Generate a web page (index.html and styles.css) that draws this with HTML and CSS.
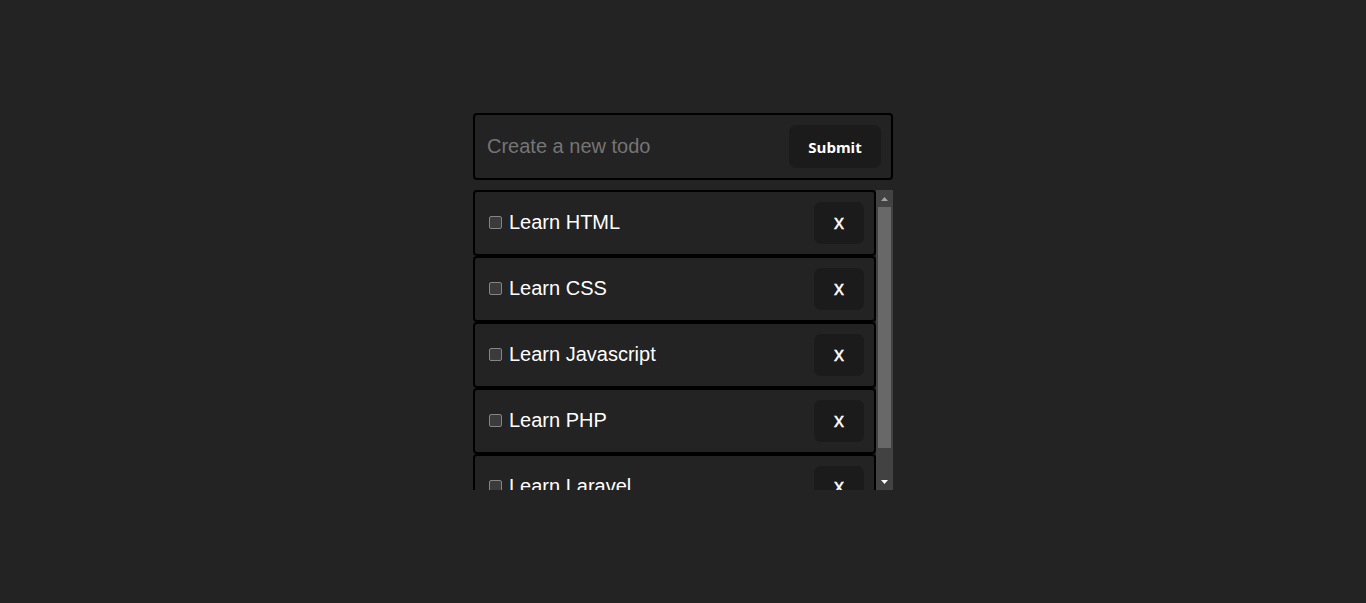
FILE: index.html
```html
<!DOCTYPE html>
<html lang="en">
<head>
<meta charset="utf-8">
<title>Todo</title>
<link rel="stylesheet" href="styles.css">
</head>
<body>
<main class="app">
  <form class="todo-form">
    <input class="todo-input" type="text" placeholder="Create a new todo">
    <button class="submit-btn" type="button">Submit</button>
  </form>
  <div class="list-wrap">
    <ul class="todo-list">
      <li class="todo-item"><label class="todo-label"><input type="checkbox" class="todo-check"><span>Learn HTML</span></label><button class="del-btn" type="button">x</button></li>
      <li class="todo-item"><label class="todo-label"><input type="checkbox" class="todo-check"><span>Learn CSS</span></label><button class="del-btn" type="button">x</button></li>
      <li class="todo-item"><label class="todo-label"><input type="checkbox" class="todo-check"><span>Learn Javascript</span></label><button class="del-btn" type="button">x</button></li>
      <li class="todo-item"><label class="todo-label"><input type="checkbox" class="todo-check"><span>Learn PHP</span></label><button class="del-btn" type="button">x</button></li>
      <li class="todo-item"><label class="todo-label"><input type="checkbox" class="todo-check"><span>Learn Laravel</span></label><button class="del-btn" type="button">x</button></li>
    </ul>
    <div class="scrollbar" aria-hidden="true">
      <div class="sb-btn"><svg width="7" height="4" viewBox="0 0 7 4"><polygon points="3.5,0 7,4 0,4" fill="#a3a3a3"/></svg></div>
      <div class="sb-track"><div class="sb-thumb"></div></div>
      <div class="sb-btn"><svg width="7" height="4" viewBox="0 0 7 4"><polygon points="0,0 7,0 3.5,4" fill="#ffffff"/></svg></div>
    </div>
  </div>
</main>
</body>
</html>
```
FILE: styles.css
```css
* { box-sizing: border-box; }
html, body { height: 100%; }
body {
  margin: 0;
  background: #232323;
  font-family: "Liberation Sans", Arial, sans-serif;
  color: #fff;
  display: flex;
  align-items: center;
  justify-content: center;
}
.app {
  width: 420px;
  display: flex;
  flex-direction: column;
  gap: 10px;
}
.todo-form {
  display: flex;
  align-items: center;
  border: 2px solid #000;
  border-radius: 4px;
  padding: 10px 10px 10px 12px;
  height: 67px;
  margin: 0;
}
.todo-input {
  flex: 1;
  background: transparent;
  border: none;
  outline: none;
  color: #fff;
  font-family: "Liberation Sans", Arial, sans-serif;
  font-size: 20px;
  padding: 0;
}
.todo-input::placeholder { color: #757575; }
.submit-btn {
  width: 92px;
  height: 43px;
  border: none;
  border-radius: 7px;
  background: #1b1b1b;
  color: #fff;
  font-family: "Open Sans", sans-serif;
  font-weight: 700;
  font-size: 15px;
  padding: 0;
}
.list-wrap {
  display: flex;
  height: 300px;
}
.todo-list {
  flex: 1;
  list-style: none;
  margin: 0;
  padding: 0;
  overflow: hidden;
}
.scrollbar {
  width: 17px;
  display: flex;
  flex-direction: column;
  background: #424242;
}
.sb-btn {
  height: 17px;
  display: flex;
  align-items: center;
  justify-content: center;
}
.sb-btn svg { display: block; }
.sb-track {
  flex: 1;
  padding: 0 2px;
}
.sb-thumb {
  height: 241px;
  background: #686868;
}
.todo-item {
  display: flex;
  align-items: center;
  justify-content: space-between;
  height: 66px;
  border: 2px solid #000;
  border-radius: 4px;
  padding: 10px;
}
.todo-label {
  display: flex;
  align-items: center;
  font-size: 20px;
  margin-top: -1px;
}
.todo-check {
  appearance: none;
  width: 13px;
  height: 13px;
  margin: 0 7px 0 4px;
  background: #3b3b3b;
  border: 1px solid #858585;
  border-radius: 2px;
}
.del-btn {
  width: 50px;
  height: 42px;
  border: none;
  border-radius: 7px;
  background: #1b1b1b;
  color: #fff;
  font-family: "Liberation Sans", Arial, sans-serif;
  font-size: 20px;
  padding: 0 0 2px;
  -webkit-text-stroke: 0.4px #fff;
}
```
